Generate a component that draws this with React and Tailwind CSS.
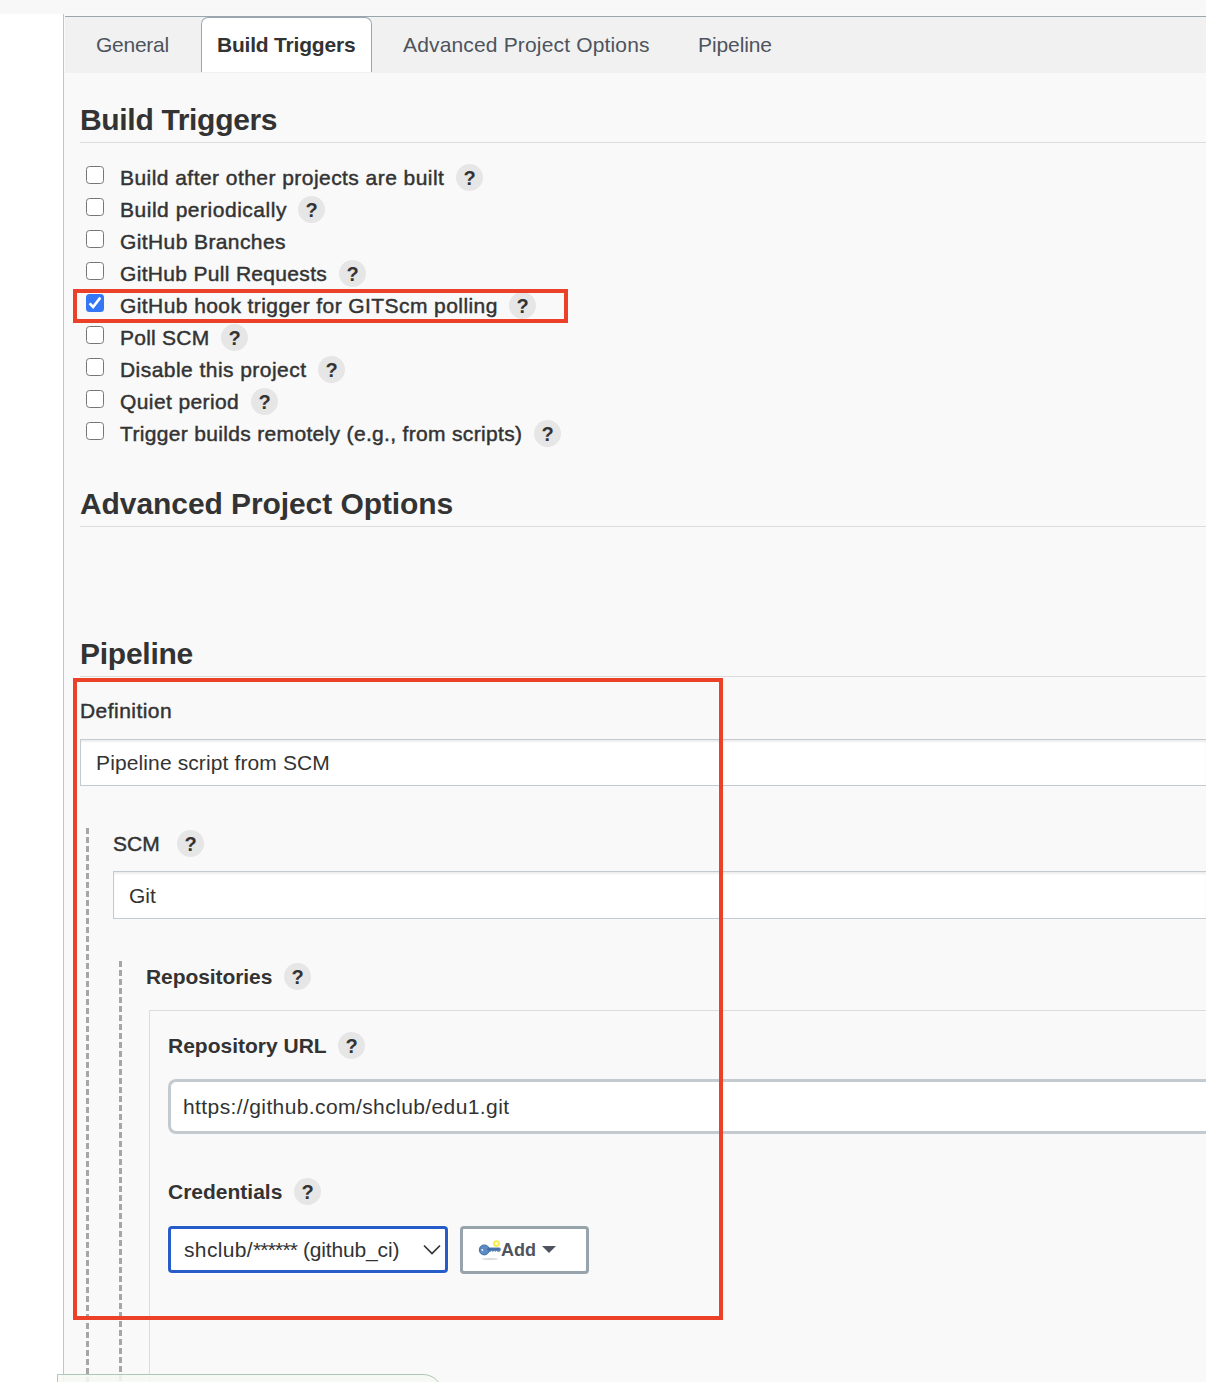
import React from "react";

const medium = "[-webkit-text-stroke:0.45px_#333]";

function Help({ className = "" }) {
  return (
    <span
      className={`flex h-[27px] w-[27px] shrink-0 items-center justify-center rounded-full bg-[#e6e6e6] text-[20px] font-bold leading-none text-[#333] ${className}`}
    >
      ?
    </span>
  );
}

function Checkbox({ checked }) {
  return (
    <span
      className={`mt-1 h-[18px] w-[18px] shrink-0 rounded-[3.5px] ${
        checked ? "bg-[#3477f6]" : "border border-[#767676] bg-white"
      }`}
    >
      {checked && (
        <svg viewBox="0 0 18 18" className="h-[18px] w-[18px]" fill="none" stroke="#fff" strokeWidth="2.6">
          <path d="M3.6 9.4 L7.1 13 L14.3 3.6" />
        </svg>
      )}
    </span>
  );
}

const triggers = [
  { label: "Build after other projects are built", width: "w-[325px]", spacing: "tracking-[0.45px]", help: true },
  { label: "Build periodically", width: "w-[167px]", spacing: "tracking-[0.52px]", help: true },
  { label: "GitHub Branches", width: "w-[166px]", spacing: "tracking-[0.4px]" },
  { label: "GitHub Pull Requests", width: "w-[208px]", spacing: "tracking-[0.32px]", help: true },
  { label: "GitHub hook trigger for GITScm polling", width: "w-[378px]", spacing: "tracking-[0.42px]", help: true, checked: true },
  { label: "Poll SCM", width: "w-[90px]", spacing: "tracking-[0.25px]", help: true },
  { label: "Disable this project", width: "w-[187px]", spacing: "tracking-[0.45px]", help: true },
  { label: "Quiet period", width: "w-[120px]", spacing: "tracking-[0.4px]", help: true },
  { label: "Trigger builds remotely (e.g., from scripts)", width: "w-[403px]", spacing: "tracking-[0.33px]", help: true },
];

function Heading({ children, className = "" }) {
  return (
    <h2 className={`h-[47px] border-b border-[#dcdcdc] text-[30px] font-bold leading-[48px] text-[#333] ${className}`}>
      {children}
    </h2>
  );
}

function Dashes({ className = "" }) {
  return (
    <div
      className={`w-[3px] shrink-0 bg-[repeating-linear-gradient(to_bottom,#a6a6a6_0px,#a6a6a6_6px,transparent_6px,transparent_9px)] ${className}`}
    />
  );
}

function KeyIcon() {
  return (
    <svg viewBox="0 0 24 24" className="-mr-px h-6 w-6 shrink-0">
      <ellipse cx="12" cy="21" rx="8.5" ry="0.9" fill="#dcdcdc" />
      <circle cx="18.5" cy="5.6" r="2.5" fill="#fffbd0" stroke="#f8ec50" strokeWidth="1.9" />
      <path
        d="M10.5 9.9h11.3l.9 1.5-1 1.8h-2.2l-1-.8-1.2.9-1.2-.9-1.4 1-1.3-1-1.2 1h-1.7z"
        fill="#5d8bc6"
        stroke="#3a689f"
        strokeWidth=".7"
      />
      <circle cx="6.3" cy="11.9" r="5" fill="#5d8bc6" stroke="#3a689f" strokeWidth=".9" />
      <path d="M9 11.2h12.5" stroke="#34558a" strokeWidth=".8" />
      <circle cx="4.4" cy="11.9" r="1.5" fill="#e9eff6" stroke="#3a689f" strokeWidth=".6" />
    </svg>
  );
}

export default function App() {
  return (
    <div className="relative h-[1382px] w-[1206px] overflow-hidden whitespace-nowrap bg-white font-['Liberation_Sans',Arial,sans-serif] text-[21px] text-[#333]">
      <div className="h-[14px] bg-[#f8f8f8]" />
      <main className="ml-[63px] h-[1368px] border-l border-[#bfc5c9] bg-[#f9f9f9] pt-[2px]">
        <nav className="ml-px flex h-[57px] border-t border-[#9ba7af] bg-[#f1f1f1] text-[#4d545d]">
          <span className="w-[136px] pl-[31px] leading-[56px] tracking-[-0.25px]">General</span>
          <span className="h-[55px] w-[171px] rounded-t-[7px] border border-b-0 border-[#9ba7af] bg-white pl-[15px] font-bold leading-[54px] tracking-[-0.2px] text-[#333]">
            Build Triggers
          </span>
          <span className="w-[326px] pl-[31px] leading-[56px] tracking-[0.16px]">Advanced Project Options</span>
          <span className="leading-[56px] tracking-[-0.1px]">Pipeline</span>
        </nav>

        <div className="pl-4">
          <Heading className="mt-[23px] tracking-[-0.32px]">Build Triggers</Heading>

          <div className="mt-[19px] pl-[6px]">
            {triggers.map((t) => (
              <div key={t.label} className="flex h-8">
                <Checkbox checked={t.checked} />
                <span className={`ml-4 leading-8 ${medium} ${t.width} ${t.spacing}`}>{t.label}</span>
                {t.help && <Help className="ml-[11px] mt-[2px]" />}
              </div>
            ))}
          </div>

          <Heading className="mt-[30px] tracking-[-0.08px]">Advanced Project Options</Heading>
          <Heading className="mt-[103px] tracking-[-0.25px]">Pipeline</Heading>

          <div className={`mt-[18px] h-8 leading-8 tracking-[0.45px] ${medium}`}>Definition</div>
          <div className="mt-3 h-[47px] border border-r-0 border-[#c3cad0] bg-white pl-[15px] leading-[46px] tracking-[0.12px] shadow-[inset_0_2px_2px_#eeeeee]">
            Pipeline script from SCM
          </div>

          <div className="mt-[42px] flex h-[554px] pl-[6px]">
            <Dashes />
            <div className="ml-6 grow">
              <div className="flex h-8">
                <span className={`w-[64px] leading-8 ${medium}`}>SCM</span>
                <Help className="mt-[2px]" />
              </div>
              <div className="mt-[11px] h-[48px] border border-r-0 border-[#c3cad0] bg-white pl-[15px] leading-[48px] shadow-[inset_0_2px_2px_#eeeeee]">
                Git
              </div>
              <div className="mt-[42px] flex h-[421px] pl-[6px]">
                <Dashes />
                <div className="ml-6 grow">
                  <div className="flex h-8">
                    <span className="w-[138px] font-bold leading-8 tracking-[-0.08px]">Repositories</span>
                    <Help className="mt-[2px]" />
                  </div>
                  <div className="ml-[3px] mt-[17px] h-[372px] border-l border-t border-[#dcdcdc] pl-[18px] pt-[19px]">
                    <div className="flex h-8">
                      <span className="w-[170px] font-bold leading-8">Repository URL</span>
                      <Help className="mt-[2px]" />
                    </div>
                    <div className="mt-[17px] h-[55px] rounded-l-[8px] border-[3px] border-r-0 border-[#c4cbd0] bg-white pl-3 leading-[50px] tracking-[0.4px]">
                      https://github.com/shclub/edu1.git
                    </div>
                    <div className="mt-[42px] flex h-8">
                      <span className="w-[126px] font-bold leading-8">Credentials</span>
                      <Help className="mt-[2px]" />
                    </div>
                    <div className="mt-[18px] flex h-12">
                      <div className="flex h-[47px] w-[280px] items-center rounded-[4px] border-[3px] border-[#275dcb] bg-white pl-[13px] shadow-[0_0_0_1px_#ffffff]">
                        <span className="w-[239px]">
                          <span className="tracking-[0.35px]">shclub/</span>
                          <span className="tracking-[-0.8px]">******</span>
                          <span className="tracking-[-0.15px]"> (github_ci)</span>
                        </span>
                        <svg viewBox="0 0 18 12" className="h-3 w-[18px] shrink-0" fill="none" stroke="#333" strokeWidth="1.7">
                          <path d="M1 1.5 9 9.5 17 1.5" />
                        </svg>
                      </div>
                      <div className="ml-3 flex h-12 w-[129px] items-center rounded-[4px] border-[3px] border-[#98a4ab] bg-white pl-[15px] text-[18px] font-bold text-[#4d545d]">
                        <KeyIcon />
                        <span className="w-[41px] pt-px">Add</span>
                        <svg viewBox="0 0 14 7" className="mb-0.5 h-[7px] w-[14px]">
                          <path d="M0 0h14L7 7z" fill="#4d545d" />
                        </svg>
                      </div>
                    </div>
                  </div>
                </div>
              </div>
            </div>
          </div>
        </div>
      </main>

      <div className="absolute left-[73px] top-[289px] h-[34px] w-[495px] border-4 border-[#eb4128]" />
      <div className="absolute left-[73px] top-[678px] h-[642px] w-[650px] border-4 border-[#eb4128]" />
      <div className="absolute left-[57px] top-[1374px] h-6 w-[386px] rounded-tr-[20px] border border-[#adc8b8] bg-[#f7f9f3]/85" />
    </div>
  );
}
